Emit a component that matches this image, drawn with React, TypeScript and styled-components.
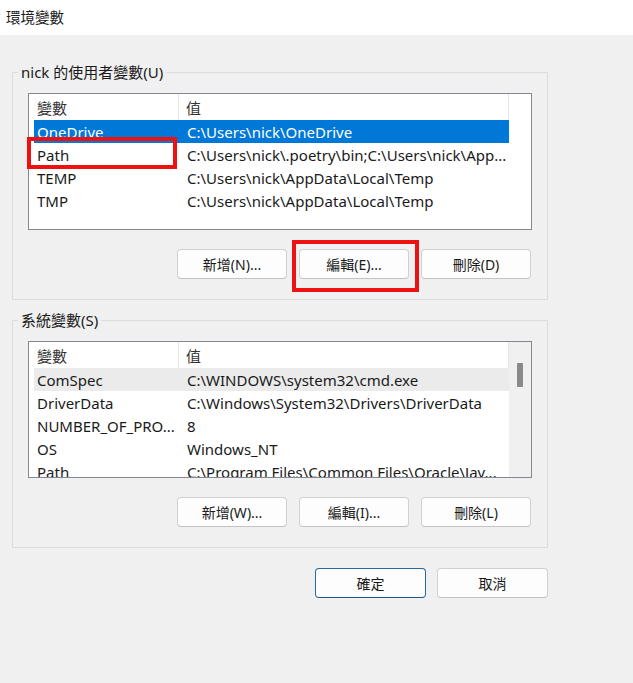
import styled, { createGlobalStyle } from 'styled-components';

const GlobalStyle = createGlobalStyle`
  html, body {
    margin: 0;
    padding: 0;
    background: #f0f0f0;
  }
  body {
    font-family: "Noto Sans", "Noto Sans CJK TC", sans-serif;
    color: #1a1a1a;
  }
`;

const Window = styled.div`
  width: 633px;
  height: 683px;
  background: #f0f0f0;
  display: flex;
  flex-direction: column;
  overflow: hidden;
`;

const TitleBar = styled.div`
  height: 35px;
  box-sizing: border-box;
  padding: 0 0 3px 6px;
  background: #ffffff;
  display: flex;
  align-items: center;
  font-size: 14.5px;
`;

const Content = styled.div`
  width: 536px;
  padding: 27px 0 0 12px;
  display: flex;
  flex-direction: column;
`;

const GroupBox = styled.fieldset`
  margin: 0;
  width: 536px;
  box-sizing: border-box;
  border: 1px solid #dcdcdc;
  padding: 11px 15px 20px 15px;
  min-width: 0;

  & + & {
    margin-top: 10px;
  }
`;

const Legend = styled.legend`
  margin-left: -10px;
  padding: 0 3px;
  font-size: 15px;
  line-height: 20px;
  color: #1a1a1a;
`;

const ListView = styled.div`
  position: relative;
  height: 137px;
  box-sizing: border-box;
  border: 1px solid #828790;
  background: #ffffff;
  display: flex;
`;

const ListMain = styled.div`
  flex: 1;
  display: flex;
  flex-direction: column;
  overflow: hidden;
`;

const HeaderRow = styled.div`
  display: grid;
  grid-template-columns: 150px 1fr;
  height: 26px;
  flex-shrink: 0;
  border-right: 1px solid #e5e5e5;
`;

const HeaderCell = styled.div<{ $first?: boolean }>`
  display: flex;
  align-items: center;
  padding-left: ${(p) => (p.$first ? '8px' : '7px')};
  border-right: ${(p) => (p.$first ? '1px solid #e5e5e5' : 'none')};
  font-size: 15px;
  color: #333333;
`;

const Rows = styled.div`
  display: flex;
  flex-direction: column;
`;

const Row = styled.div<{ $state?: 'selected' | 'hover' }>`
  display: grid;
  grid-template-columns: 150px 1fr;
  height: 23px;
  margin-left: 5px;
  flex-shrink: 0;
  align-items: center;
  font-size: 15px;
  background: ${(p) =>
    p.$state === 'selected' ? '#0078d7' : p.$state === 'hover' ? '#ebebeb' : 'transparent'};
  color: ${(p) => (p.$state === 'selected' ? '#ffffff' : '#1a1a1a')};
`;

const Cell = styled.div`
  padding-left: 3px;
  white-space: nowrap;
  overflow: hidden;
`;

const ScrollTrack = styled.div<{ $visible?: boolean }>`
  width: 22px;
  flex-shrink: 0;
  background: ${(p) => (p.$visible ? '#f0f0f0' : '#ffffff')};
  display: flex;
  justify-content: center;
  padding-top: 21px;
  box-sizing: border-box;
`;

const ScrollThumb = styled.div`
  width: 6px;
  height: 24px;
  background: #8a8a8a;
  border-radius: 1px;
`;

const ButtonRow = styled.div`
  display: flex;
  justify-content: flex-end;
  gap: 12px;
  margin-top: 19px;
  padding-right: 1px;
`;

const Button = styled.button<{ $primary?: boolean; $wide?: boolean }>`
  width: ${(p) => (p.$wide ? '111px' : '110px')};
  height: 30px;
  box-sizing: border-box;
  border: 1px solid ${(p) => (p.$primary ? '#2369a3' : '#d0d0d0')};
  border-bottom-color: ${(p) => (p.$primary ? '#1b5a8f' : '#c2c2c2')};
  border-radius: 4px;
  background: #fdfdfd;
  font-family: "Noto Sans", "Noto Sans CJK TC", sans-serif;
  font-size: 14px;
  color: #1a1a1a;
  padding: 0;
`;

const Marked = styled.div`
  position: relative;
  display: flex;
`;

const RedBox = styled.div<{ $top: number; $left: number; $w: number; $h: number }>`
  position: absolute;
  top: ${(p) => p.$top}px;
  left: ${(p) => p.$left}px;
  width: ${(p) => p.$w}px;
  height: ${(p) => p.$h}px;
  box-sizing: border-box;
  border: 4px solid #ee1111;
  pointer-events: none;
`;

const DialogButtons = styled.div`
  display: flex;
  justify-content: flex-end;
  gap: 11px;
  margin-top: 20px;
`;

type Variable = { name: string; value: string; state?: 'selected' | 'hover' };

const userVars: Variable[] = [
  { name: 'OneDrive', value: 'C:\\Users\\nick\\OneDrive', state: 'selected' },
  { name: 'Path', value: 'C:\\Users\\nick\\.poetry\\bin;C:\\Users\\nick\\App...' },
  { name: 'TEMP', value: 'C:\\Users\\nick\\AppData\\Local\\Temp' },
  { name: 'TMP', value: 'C:\\Users\\nick\\AppData\\Local\\Temp' },
];

const systemVars: Variable[] = [
  { name: 'ComSpec', value: 'C:\\WINDOWS\\system32\\cmd.exe', state: 'hover' },
  { name: 'DriverData', value: 'C:\\Windows\\System32\\Drivers\\DriverData' },
  { name: 'NUMBER_OF_PRO...', value: '8' },
  { name: 'OS', value: 'Windows_NT' },
  { name: 'Path', value: 'C:\\Program Files\\Common Files\\Oracle\\Jav...' },
];

const VariableList = (props: { vars: Variable[]; scroll?: boolean; children?: React.ReactNode }) => {
  return (
    <ListView>
      <ListMain>
        <HeaderRow>
          <HeaderCell $first>變數</HeaderCell>
          <HeaderCell>值</HeaderCell>
        </HeaderRow>
        <Rows>
          {props.vars.map((v) => (
            <Row key={v.name} $state={v.state}>
              <Cell>{v.name}</Cell>
              <Cell>{v.value}</Cell>
            </Row>
          ))}
        </Rows>
      </ListMain>
      <ScrollTrack $visible={props.scroll}>{props.scroll && <ScrollThumb />}</ScrollTrack>
      {props.children}
    </ListView>
  );
};

const App = () => {
  return (
    <>
      <GlobalStyle />
      <Window>
        <TitleBar>環境變數</TitleBar>
        <Content>
          <GroupBox>
            <Legend>nick 的使用者變數(U)</Legend>
            <VariableList vars={userVars}>
              <RedBox $top={43} $left={-2} $w={150} $h={32} />
            </VariableList>
            <ButtonRow>
              <Button>新增(N)...</Button>
              <Marked>
                <Button>編輯(E)...</Button>
                <RedBox $top={-9} $left={-7} $w={127} $h={52} />
              </Marked>
              <Button>刪除(D)</Button>
            </ButtonRow>
          </GroupBox>

          <GroupBox>
            <Legend>系統變數(S)</Legend>
            <VariableList vars={systemVars} scroll />
            <ButtonRow>
              <Button>新增(W)...</Button>
              <Button>編輯(I)...</Button>
              <Button>刪除(L)</Button>
            </ButtonRow>
          </GroupBox>

          <DialogButtons>
            <Button $primary $wide>確定</Button>
            <Button $wide>取消</Button>
          </DialogButtons>
        </Content>
      </Window>
    </>
  );
};

export default App;
